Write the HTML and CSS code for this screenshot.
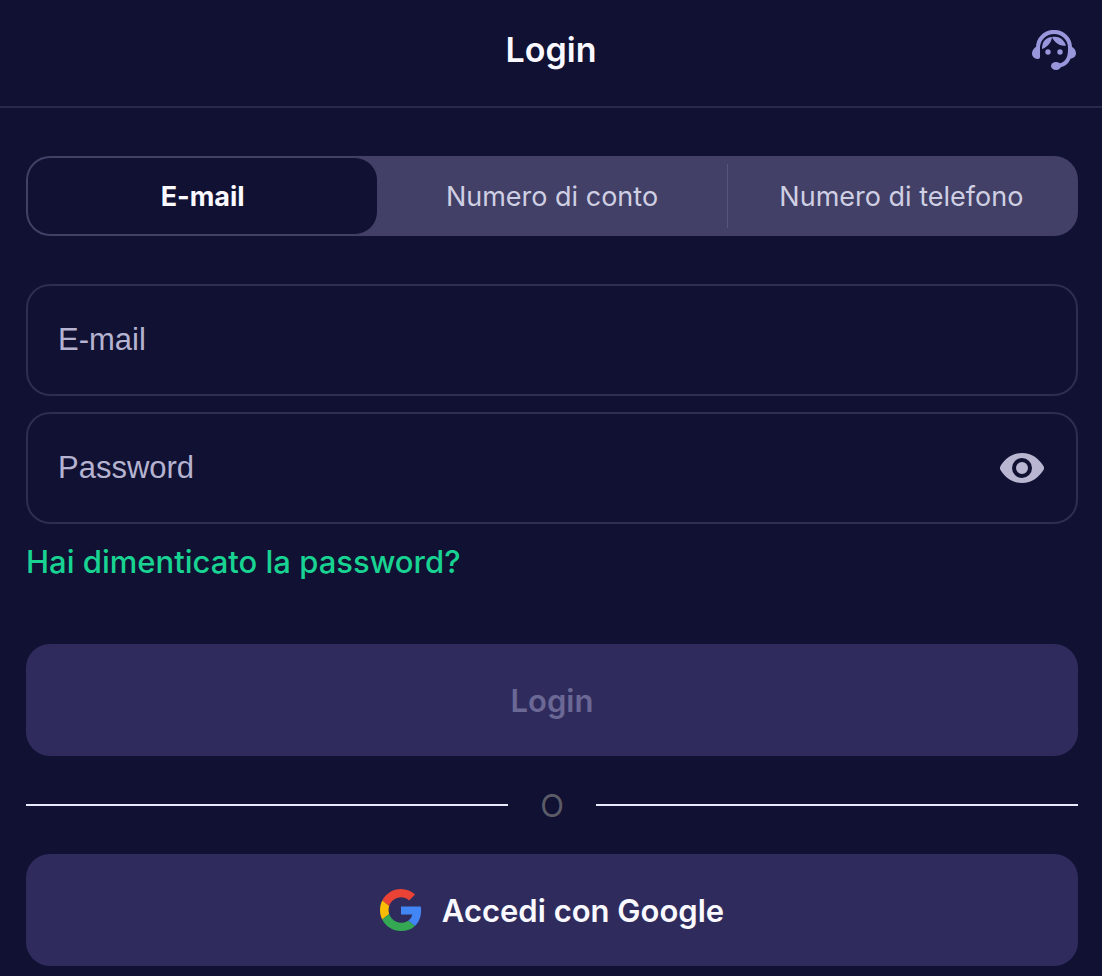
FILE: index.html
```html
<!DOCTYPE html>
<html lang="it">
<head>
    <meta charset="UTF-8">
    <meta name="viewport" content="width=device-width, initial-scale=1.0">
    <title>Login</title>
    <link rel="stylesheet" href="styles.css">
</head>
<body>
    <header class="header">
        <h1>Login</h1>
        <button type="button" class="support" aria-label="Assistenza">
            <svg width="44" height="40" viewBox="0 0 44 40" fill="currentColor">
                <path d="M6 20V17.500a16 15.600 0 0 1 32 0V20C38 29 34 35 25 36" fill="none" stroke="currentColor" stroke-width="4"/>
                <path d="M8 16v11q0 2-2 2C2.500 29 0 26.500 0 23.500S2 18 4.500 16.500z"/>
                <path d="M37 16v12.500h1.500c3 0 5.500-2.500 5.500-5.300S42 18 39.500 16.500z"/>
                <ellipse cx="24" cy="36" rx="5" ry="4"/>
                <path d="M20 7C14 7.500 10 11 10 19c5.500-2 9.500-6.500 10-12z"/>
                <path d="M20 7c6-1.500 12 2 14 8.500-6 1-11.500-2.500-14-8.500z"/>
                <circle cx="16" cy="22" r="2.700"/>
                <circle cx="28" cy="22" r="2.700"/>
            </svg>
        </button>
    </header>

    <main class="content">
        <div class="tabs">
            <button type="button" class="tab active">E-mail</button>
            <button type="button" class="tab">Numero di conto</button>
            <button type="button" class="tab">Numero di telefono</button>
        </div>

        <form id="formLogin">
            <div class="field">
                <input type="email" id="email" placeholder="E-mail" aria-label="E-mail" required>
            </div>
            <div class="field">
                <input type="password" id="password" placeholder="Password" aria-label="Password" required>
                <button type="button" id="togglePassword" class="toggle" aria-label="Mostra password">
                    <svg width="44" height="30" viewBox="0 0 44 30">
                        <path d="M22 0C12 0 5 6 .7 12.800a4 4 0 0 0 0 4.400C5 24 12 30 22 30s17-6 21.300-12.800a4 4 0 0 0 0-4.400C39 6 32 0 22 0z" fill="currentColor"/>
                        <circle cx="22" cy="15" r="8" fill="none" stroke="#111133" stroke-width="4"/>
                    </svg>
                </button>
            </div>
            <a href="#" class="forgot">Hai dimenticato la password?</a>
            <button type="submit" class="btn btn-login" disabled>Login</button>
        </form>

        <div class="divider"><span>O</span></div>

        <button type="button" class="btn btn-google">
            <svg width="42" height="42" viewBox="0 0 48 48">
                <path fill="#EA4335" d="M24 9.500c3.540 0 6.710 1.220 9.210 3.600l6.850-6.850C35.900 2.380 30.470 0 24 0 14.620 0 6.510 5.380 2.560 13.220l7.980 6.190C12.430 13.720 17.740 9.500 24 9.500z"/>
                <path fill="#4285F4" d="M46.980 24.550c0-1.570-.15-3.090-.38-4.550H24v9.020h12.940c-.58 2.960-2.260 5.480-4.780 7.180l7.730 6c4.510-4.180 7.090-10.360 7.090-17.650z"/>
                <path fill="#FBBC05" d="M10.530 28.590c-.48-1.450-.76-2.990-.76-4.590s.27-3.140.76-4.590l-7.980-6.190C.92 16.460 0 20.120 0 24c0 3.880.92 7.540 2.560 10.780l7.970-6.190z"/>
                <path fill="#34A853" d="M24 48c6.480 0 11.930-2.130 15.890-5.810l-7.730-6c-2.150 1.450-4.920 2.300-8.160 2.300-6.260 0-11.570-4.220-13.470-9.910l-7.980 6.190C6.510 42.620 14.620 48 24 48z"/>
            </svg>
            Accedi con Google
        </button>
    </main>

    <script>
        let email = document.getElementById("email");
        let password = document.getElementById("password");

        document.getElementById("togglePassword").addEventListener("click", function() {
            password.type = password.type === "password" ? "text" : "password";
        });

        document.getElementById("formLogin").addEventListener("input", function() {
            document.querySelector(".btn-login").disabled = !email.value || !password.value;
        });
    </script>
</body>
</html>
```
FILE: styles.css
```css
* {
    box-sizing: border-box;
}

body {
    margin: 0;
    font-family: Inter, "Liberation Sans", sans-serif;
    background-color: #111133;
    color: #f9f9ff;
}

button {
    padding: 0;
    border: none;
    background: none;
    font-family: inherit;
    cursor: pointer;
}

svg {
    display: block;
}

.header {
    display: grid;
    grid-template-columns: 1fr auto 1fr;
    align-items: center;
    height: 108px;
    padding: 0 26px 6px;
    border-bottom: 2px solid #292947;
}

h1 {
    grid-column: 2;
    margin: 0;
    font-size: 34px;
    font-weight: 600;
    line-height: 44px;
}

.support {
    justify-self: end;
    color: #9a96dc;
}

.content {
    padding: 48px 24px 10px 26px;
}

.tabs {
    display: grid;
    grid-template-columns: repeat(3, 1fr);
    height: 80px;
    padding: 2px;
    margin-bottom: 48px;
    border-radius: 24px;
    background-color: #424066;
}

.tab {
    position: relative;
    border-radius: 22px;
    color: #cfcfe3;
    font-size: 27px;
}

.tab.active {
    background-color: #111133;
    color: #f9f9ff;
    font-weight: 700;
}

.tab:last-child::before {
    content: "";
    position: absolute;
    left: 0;
    top: 6px;
    bottom: 6px;
    width: 1px;
    background-color: #57557a;
}

.field {
    display: flex;
    align-items: center;
    height: 112px;
    padding: 0 32px 0 30px;
    margin-bottom: 16px;
    border: 2px solid #2f2e50;
    border-radius: 24px;
}

.field input {
    flex: 1;
    min-width: 0;
    height: 100%;
    padding: 0;
    border: none;
    outline: none;
    background: none;
    color: #f9f9ff;
    font-family: "Liberation Sans", Arial, sans-serif;
    font-size: 31px;
}

.field input::placeholder {
    color: #b5b3d0;
    opacity: 1;
}

.toggle {
    color: #b8b6d0;
}

.forgot {
    display: table;
    color: #18d392;
    font-size: 31px;
    font-weight: 500;
    line-height: 44px;
    text-decoration: none;
}

.btn {
    display: flex;
    align-items: center;
    justify-content: center;
    gap: 20px;
    width: 100%;
    height: 112px;
    border-radius: 24px;
    background-color: #2f2c5d;
    color: #f9f9ff;
    font-size: 31px;
    font-weight: 600;
}

.btn-login {
    margin-top: 60px;
    color: #6b6895;
}

.divider {
    display: flex;
    align-items: center;
    gap: 32px;
    height: 98px;
    color: #5c5c68;
    font-size: 31px;
}

.divider::before,
.divider::after {
    content: "";
    flex: 1;
    height: 2px;
    background-color: #e9e9fb;
}
```
